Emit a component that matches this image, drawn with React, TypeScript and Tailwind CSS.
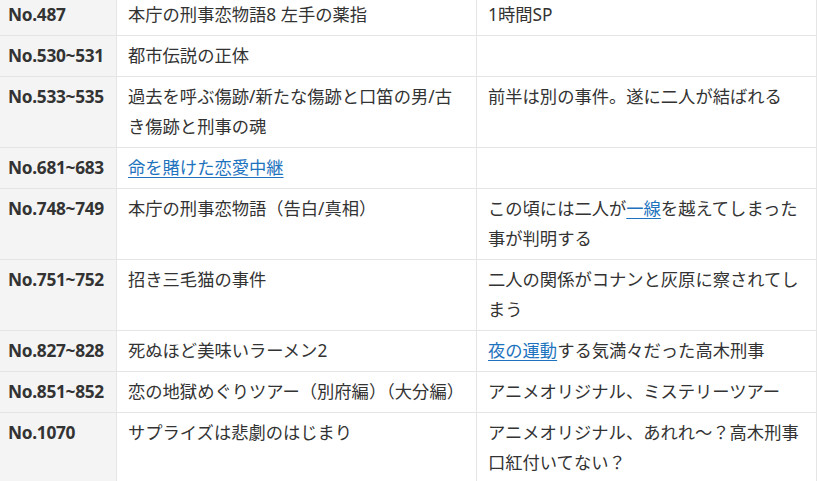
import React from "react";

type Cell = React.ReactNode;
type Row = { no: string; title: Cell; note: Cell };

const A = ({ children }: { children: React.ReactNode }) => (
  <a href="#" className="text-[#1e73be] underline underline-offset-[3px] decoration-[1px]">
    {children}
  </a>
);

const rows: Row[] = [
  { no: "No.487", title: "本庁の刑事恋物語8 左手の薬指", note: "1時間SP" },
  { no: "No.530~531", title: "都市伝説の正体", note: "" },
  {
    no: "No.533~535",
    title: "過去を呼ぶ傷跡/新たな傷跡と口笛の男/古き傷跡と刑事の魂",
    note: "前半は別の事件。遂に二人が結ばれる",
  },
  { no: "No.681~683", title: <A>命を賭けた恋愛中継</A>, note: "" },
  {
    no: "No.748~749",
    title: "本庁の刑事恋物語（告白/真相）",
    note: (
      <>
        この頃には二人が<A>一線</A>を越えてしまった事が判明する
      </>
    ),
  },
  {
    no: "No.751~752",
    title: "招き三毛猫の事件",
    note: "二人の関係がコナンと灰原に察されてしまう",
  },
  {
    no: "No.827~828",
    title: "死ぬほど美味いラーメン2",
    note: (
      <>
        <A>夜の運動</A>する気満々だった高木刑事
      </>
    ),
  },
  {
    no: "No.851~852",
    title: "恋の地獄めぐりツアー（別府編）（大分編）",
    note: "アニメオリジナル、ミステリーツアー",
  },
  {
    no: "No.1070",
    title: "サプライズは悲劇のはじまり",
    note: "アニメオリジナル、あれれ～？高木刑事口紅付いてない？",
  },
];

export default function App() {
  return (
    <div
      className="w-[817px] h-[481px] overflow-hidden bg-white text-[#333] text-[17.3px] leading-[30px]"
      style={{ fontFamily: '"Noto Sans", "Noto Sans CJK JP", sans-serif' }}
    >
      <div className="-mt-[5px] w-[817px] flex flex-col">
        {rows.map((r, i) => (
          <div key={i} className="flex border-b border-[#e5e5e5]">
            <div className="w-[117px] shrink-0 bg-[#f4f4f4] border-r border-[#e5e5e5] pl-[8px] pr-[2px] py-[5px] font-bold tracking-[-0.3px] whitespace-nowrap">
              {r.no}
            </div>
            <div className="w-[360px] shrink-0 border-r border-[#e5e5e5] pl-[11px] pr-[11px] py-[5px]">
              {r.title}
            </div>
            <div className="w-[340px] shrink-0 border-r border-[#e5e5e5] pl-[11px] pr-[11px] py-[5px]">
              {r.note}
            </div>
          </div>
        ))}
      </div>
    </div>
  );
}
